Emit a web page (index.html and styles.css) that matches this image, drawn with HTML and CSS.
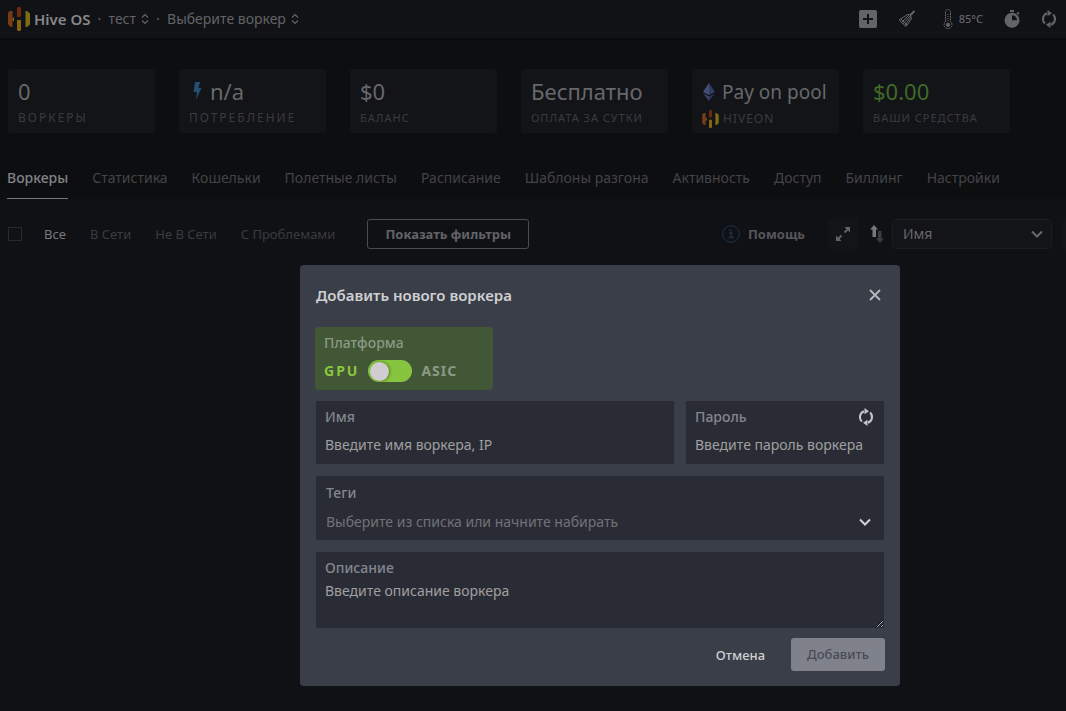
FILE: index.html
```html
<!DOCTYPE html>
<html lang="ru">
<head>
<meta charset="utf-8">
<meta name="viewport" content="width=device-width, initial-scale=1">
<title>Hive OS</title>
<link rel="stylesheet" href="styles.css">
</head>
<body>
<svg class="defs" aria-hidden="true">
  <symbol id="hive" viewBox="0 0 22 24">
    <path fill="#7a3c16" d="M0 6 1.500 4H4.500V20H3L0 17.500Z"/>
    <path fill="#70280f" d="M9 1 10 0H12L13 1V9L12 10H9Z"/>
    <path fill="#8a6214" d="M9 13H13V23L12 24H10L9 23ZM4.500 10.500H6V14H4.500Z"/>
    <path fill="#7d6c14" d="M17.500 4H19L22 6.500V17.500L19 20H17.500Z"/>
  </symbol>
  <symbol id="updown" viewBox="0 0 8 12"><path d="M1 4.500 4 1.500 7 4.500M1 7.500 4 10.500 7 7.500" fill="none" stroke="currentColor" stroke-width="1.200"/></symbol>
  <symbol id="refresh" viewBox="0 0 16 18">
    <path d="M6 3.200A6.200 6.200 0 0 0 3.900 13.500M10 14.800A6.200 6.200 0 0 0 12.100 4.500" fill="none" stroke="currentColor" stroke-width="2"/>
    <path d="M6.500 0 11 3.200 6.500 6.300ZM9.500 11.700 5 14.800 9.500 18Z" fill="currentColor"/>
  </symbol>
  <symbol id="chevron" viewBox="0 0 12 8"><path d="M1 1.500 6 6.500 11 1.500" fill="none" stroke="currentColor" stroke-width="2"/></symbol>
</svg>

<header class="topbar">
  <a class="brand" href="#"><svg class="brand-logo"><use href="#hive"/></svg>Hive OS</a>
  <span class="dot">·</span>
  <button class="crumb" type="button">тест<svg class="updown"><use href="#updown"/></svg></button>
  <span class="dot">·</span>
  <button class="crumb" type="button">Выберите воркер<svg class="updown"><use href="#updown"/></svg></button>
  <div class="tools">
    <button class="tool" type="button" aria-label="Добавить">
      <svg width="18" height="18" viewBox="0 0 18 18"><rect width="18" height="18" rx="2" fill="currentColor"/><path d="M9 4V14M4 9H14" stroke="#111216" stroke-width="2"/></svg>
    </button>
    <button class="tool" type="button" aria-label="Очистить">
      <svg width="18" height="18" viewBox="0 0 18 18" fill="none" stroke="currentColor"><path d="M16.500 1 12 5.500" stroke-width="2"/><path d="M9.500 4.500 13.500 8.500 8 16.500 1 10Z"/><path d="M10.500 5.500 3.500 12.500M11.500 6.500 5 14M12.500 7.500 7 15.500M3 9 9 15M9.500 4.500Q12 4 12.500 5.500T13.500 8.500"/></svg>
    </button>
    <button class="tool temp" type="button">
      <svg width="10" height="20" viewBox="0 0 10 20" fill="none" stroke="currentColor"><path d="M2.500 12.500V3A2.500 2.500 0 0 1 7.500 3V12.500A4 4 0 1 1 2.500 12.500Z" stroke-dasharray="2 .6"/><path d="M5 5V12" stroke-dasharray="1 1"/><circle cx="5" cy="15.700" r="1.700" fill="currentColor"/></svg>85°C
    </button>
    <button class="tool" type="button" aria-label="Таймер">
      <svg width="16" height="18" viewBox="0 0 16 18"><path d="M6 0H10V2H6Z M12.500 3.200 14 1.800 15.500 3.300 14.200 4.700Z" fill="currentColor"/><circle cx="8" cy="10.300" r="7.500" fill="currentColor"/><path d="M8 10.300V5.300A5 5 0 0 1 13 10.300Z" fill="#111216"/></svg>
    </button>
    <button class="tool" type="button" aria-label="Обновить"><svg class="refresh"><use href="#refresh"/></svg></button>
  </div>
</header>

<section class="summary">
  <div class="cards">
    <div class="card"><div class="value">0</div><div class="caption wide">Воркеры</div></div>
    <div class="card"><div class="value"><svg width="17" height="18" viewBox="0 0 17 18"><path d="M6 0H11L9.500 6H12.500L7 18 8 10H4.500Z" fill="#234f70"/></svg>n/a</div><div class="caption wide">Потребление</div></div>
    <div class="card"><div class="value">$0</div><div class="caption">Баланс</div></div>
    <div class="card"><div class="value">Бесплатно</div><div class="caption">Оплата за сутки</div></div>
    <div class="card pool"><div class="value small"><svg width="12" height="18" viewBox="0 0 12 18"><path d="M6 0 12 9 6 12Z" fill="#303b63"/><path d="M6 0 0 9 6 12Z" fill="#454e79"/><path d="M0 10.200 6 18V13.500Z" fill="#3d466f"/><path d="M12 10.200 6 18V13.500Z" fill="#2a3357"/></svg>Pay on pool</div><div class="caption"><svg class="pool-logo"><use href="#hive"/></svg>Hiveon</div></div>
    <div class="card"><div class="value money">$0.00</div><div class="caption">Ваши средства</div></div>
  </div>
  <nav class="tabs">
    <a class="tab active" href="#">Воркеры</a>
    <a class="tab" href="#">Статистика</a>
    <a class="tab" href="#">Кошельки</a>
    <a class="tab" href="#">Полетные листы</a>
    <a class="tab" href="#">Расписание</a>
    <a class="tab" href="#">Шаблоны разгона</a>
    <a class="tab" href="#">Активность</a>
    <a class="tab" href="#">Доступ</a>
    <a class="tab" href="#">Биллинг</a>
    <a class="tab" href="#">Настройки</a>
  </nav>
</section>

<main class="toolbar">
  <input class="check" type="checkbox" aria-label="Выбрать все">
  <div class="filters">
    <a class="filter active" href="#">Все</a>
    <a class="filter" href="#">В Сети</a>
    <a class="filter" href="#">Не В Сети</a>
    <a class="filter" href="#">С Проблемами</a>
  </div>
  <button class="show-filters" type="button">Показать фильтры</button>
  <button class="help" type="button"><svg width="18" height="18" viewBox="0 0 18 18" fill="none" stroke="#1d334c"><circle cx="9" cy="9" r="8.300"/><path d="M7 8H9.500V12.500M6.500 12.500H12" stroke-width="1.500"/><path d="M8.500 4.500V6.300" stroke-width="2"/></svg>Помощь</button>
  <button class="expand" type="button" aria-label="Развернуть"><svg width="14" height="14" viewBox="0 0 14 14"><path d="M8.500 0H14V5.500ZM0 8.500V14H5.500Z" fill="currentColor"/><path d="M2 12 5.500 8.500M8.500 5.500 12 2" stroke="currentColor" stroke-width="1.800"/></svg></button>
  <button class="sort" type="button" aria-label="Сортировка"><svg width="14" height="18" viewBox="0 0 14 18"><path d="M4 0 8 4.500H6V12H2.500V4.500H0Z" fill="#77787b"/><path d="M10 18 14 13.500H11.500V6H8V13.500H6Z" fill="#3b3c41"/></svg></button>
  <div class="select-wrap">
    <select class="order" aria-label="Порядок"><option>Имя</option></select>
    <svg class="chevron"><use href="#chevron"/></svg>
  </div>
  <div class="next-tool"></div>
</main>

<div class="overlay">
  <form class="dialog" role="dialog" aria-labelledby="dialog-title">
    <div class="dialog-head">
      <h2 class="title" id="dialog-title">Добавить нового воркера</h2>
      <button class="close" type="button" aria-label="Закрыть"><svg width="12" height="12" viewBox="0 0 12 12"><path d="M1 1 11 11M11 1 1 11" stroke="currentColor" stroke-width="1.800"/></svg></button>
    </div>
    <div class="platform">
      <div class="platform-label">Платформа</div>
      <label class="switch"><span class="on">GPU</span><input class="toggle" type="checkbox" role="switch"><span class="off">ASIC</span></label>
    </div>
    <div class="row">
      <div class="field">
        <label class="label" for="name">Имя</label>
        <input class="input" id="name" type="text" placeholder="Введите имя воркера, IP">
      </div>
      <div class="field password">
        <div class="label-row"><label class="label" for="password">Пароль</label><button class="generate" type="button" aria-label="Сгенерировать"><svg class="refresh"><use href="#refresh"/></svg></button></div>
        <input class="input" id="password" type="text" placeholder="Введите пароль воркера">
      </div>
    </div>
    <div class="field tags">
      <label class="label" for="tags">Теги</label>
      <div class="combo"><input class="input" id="tags" type="text" placeholder="Выберите из списка или начните набирать"><svg class="chevron"><use href="#chevron"/></svg></div>
    </div>
    <div class="field description">
      <label class="label" for="description">Описание</label>
      <textarea class="area" id="description" placeholder="Введите описание воркера"></textarea>
    </div>
    <div class="actions">
      <button class="cancel" type="button">Отмена</button>
      <button class="submit" type="submit" disabled>Добавить</button>
    </div>
  </form>
</div>
</body>
</html>
```
FILE: styles.css
```css
* { box-sizing: border-box; }
body {
  margin: 0;
  min-height: 100vh;
  overflow-x: hidden;
  background: #101115;
  color: #626367;
  font: 14px/20px "Noto Sans", "Open Sans", sans-serif;
}
button, input, select, textarea { font: inherit; color: inherit; }
button { margin: 0; padding: 0; border: 0; background: none; }
a { color: inherit; text-decoration: none; }
svg { flex: none; }
.defs { position: absolute; width: 0; height: 0; }

.topbar {
  display: flex;
  align-items: center;
  gap: 7px;
  height: 40px;
  padding: 0 9px 0 8px;
  border-bottom: 2px solid #0a0a0d;
  background: #111216;
}
.brand { display: flex; align-items: center; gap: 4px; color: #86878a; font-size: 15px; font-weight: 600; }
.brand-logo { width: 22px; height: 24px; }
.dot { width: 4px; color: #626367; }
.crumb { display: flex; align-items: center; gap: 5px; }
.updown { width: 8px; height: 12px; }
.tools { display: flex; align-items: center; gap: 21px; margin-left: auto; color: #636467; }
.tool { display: flex; align-items: center; }
.temp { gap: 6px; padding-left: 6px; font-size: 11px; font-weight: 500; }
.refresh { width: 16px; height: 18px; }

.summary { background: #0d0e10; padding-top: 29px; }
.cards { display: grid; grid-template-columns: repeat(6, minmax(0, 1fr)); gap: 24px; padding: 0 56px 0 8px; }
.card { display: flex; flex-direction: column; height: 64px; padding: 7px 10px 3px; border-radius: 2px; background: #131418; white-space: nowrap; }
.card.pool { padding-top: 8px; }
.value { display: flex; align-items: center; gap: 4px; height: 30px; color: #67686b; font-size: 22px; }
.value.small { gap: 7px; padding-left: 1px; font-size: 19px; }
.value.money { color: #40692a; }
.caption { display: flex; align-items: center; gap: 4px; height: 22px; color: #3a3b3f; font-size: 11px; letter-spacing: 1px; text-transform: uppercase; }
.caption.wide { font-size: 12px; letter-spacing: 2px; }
.pool .caption { font-size: 12px; }
.pool-logo { width: 17px; height: 18px; }
.value + .caption { margin-top: 1px; }
.tabs { display: flex; gap: 24px; margin-top: 35px; padding: 0 7px; white-space: nowrap; }
.tab { height: 31px; color: #434447; }
.tab.active { border-bottom: 1px solid #77787b; color: #828386; font-weight: 500; }

.toolbar { display: flex; align-items: center; padding: 20px 0 0 8px; white-space: nowrap; }
.check { appearance: none; width: 14px; height: 14px; margin: 0 22px 0 0; border: 1px solid #292a2e; }
.filters { display: flex; gap: 24px; font-size: 13px; color: #3a3b3f; }
.filter.active { color: #77787b; }
.show-filters { height: 30px; margin-left: 32px; padding: 0 17px; border: 1px solid #4b4c4f; border-radius: 3px; font-size: 13px; font-weight: 700; }
.help { display: flex; align-items: center; gap: 8px; margin-left: auto; color: #55565a; font-size: 13px; font-weight: 700; }
.expand { display: grid; place-items: center; width: 30px; height: 30px; margin: 0 12px 0 23px; background: #131418; }
.sort { display: flex; margin-right: 8px; }
.select-wrap { display: grid; align-items: center; width: 160px; color: #67686b; }
.select-wrap > * { grid-area: 1 / 1; }
.order { appearance: none; width: 100%; height: 30px; padding: 0 10px; border: 1px solid #1c1d21; border-radius: 4px; background: #131418; }
.chevron { width: 12px; height: 8px; justify-self: end; margin-right: 9px; pointer-events: none; }
.next-tool { width: 3px; height: 30px; margin-left: 11px; background: #131418; }

.overlay { position: absolute; top: 265px; left: 300px; right: 166px; }
.dialog { display: flex; flex-direction: column; gap: 12px; padding: 20px 16px 15px; border-radius: 4px; background: #393e49; }
.dialog-head { display: flex; align-items: center; justify-content: space-between; height: 20px; margin-bottom: 10px; padding-right: 3px; }
.title { margin: 0; color: #cfd0d1; font-size: 15px; font-weight: 600; }
.close { display: flex; color: #b7b9bd; }
.platform { width: 178px; height: 63px; margin: 0 0 -1px -1px; padding: 6px 9px; border-radius: 4px; background: #425736; color: #8b9a85; font-weight: 500; }
.switch { display: flex; align-items: center; gap: 9px; margin-top: 7px; font-weight: 700; }
.on { color: #8bc63f; letter-spacing: 2px; }
.off { letter-spacing: 1px; }
.toggle { appearance: none; display: flex; align-items: center; width: 44px; height: 22px; margin: 0; padding: 0 2px; border-radius: 11px; background: #87c43f; }
.toggle::before { content: ""; width: 19px; height: 19px; border-radius: 50%; background: #cfcdcf; box-shadow: 1px 0 3px #55781f; }
.row { display: flex; gap: 12px; }
.field { display: flex; flex: 1; flex-direction: column; gap: 8px; min-width: 0; height: 63px; padding: 6px 9px; background: #292c35; }
.field.password { flex: 0 0 198px; }
.label { color: #84878e; font-weight: 500; }
.label-row { display: flex; align-items: center; justify-content: space-between; height: 20px; }
.generate { display: flex; color: #c3c5c8; padding-right: 1px; }
.input { width: 100%; height: 20px; padding: 0; border: 0; outline: 0; background: none; }
.input::placeholder, .area::placeholder { color: #a09f9f; opacity: 1; }
.tags { flex: none; gap: 9px; height: 64px; padding: 7px 10px; }
.tags .label { height: 20px; }
.combo { display: flex; align-items: center; }
.combo .input::placeholder { color: #717277; }
.combo .chevron { margin-right: 3px; color: #d3d4d6; }
.description { flex: none; height: 76px; gap: 0; padding: 6px 0 0; }
.description .label { padding-left: 9px; }
.area { flex: 1; width: 100%; min-height: 50px; padding: 3px 9px; border: 0; outline: 0; background: none; resize: vertical; }
.actions { display: flex; justify-content: flex-end; align-items: center; gap: 26px; height: 33px; margin: -2px -1px 0 0; font-size: 13px; font-weight: 500; }
.cancel { color: #cfd0d2; }
.submit { height: 33px; padding: 0 16px 1px; border-radius: 3px; background: #7f828a; color: #474b56; }
```
